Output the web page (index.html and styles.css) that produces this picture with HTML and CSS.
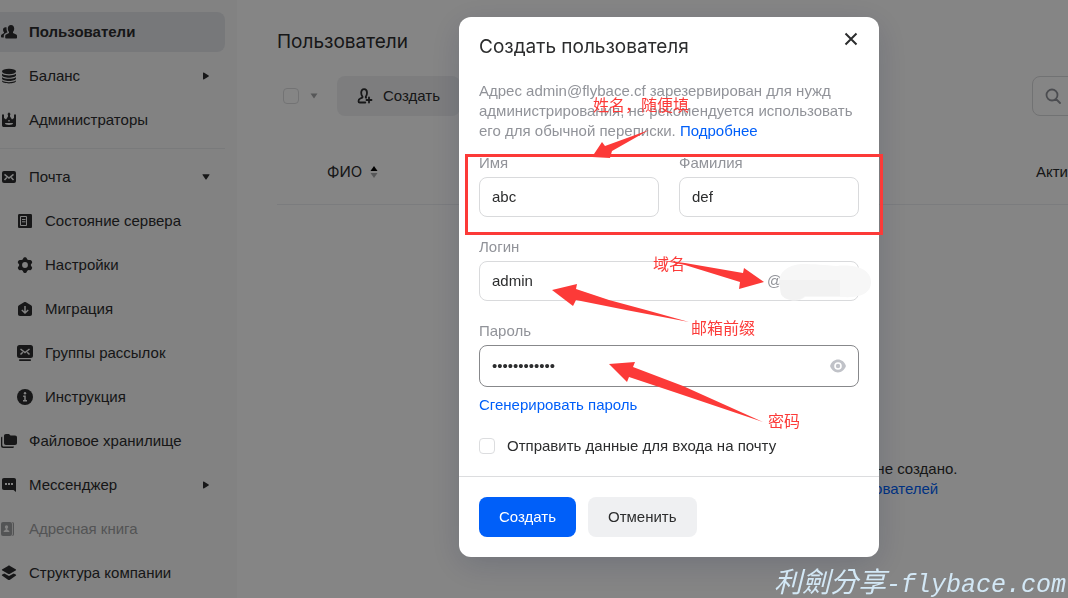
FILE: index.html
```
<!DOCTYPE html>
<html lang="ru">
<head>
    <meta charset="UTF-8">
    <meta name="viewport" content="width=device-width, initial-scale=1.0">
    <title>Пользователи</title>
    <link rel="stylesheet" href="styles.css">
</head>
<body>
    <div class="app">
        <nav class="sidebar">
            <a class="nav-item active" href="#">
                <svg class="icon" viewBox="0 0 16 16"><path d="M10 1c2 0 3.200 1.500 3.200 3.600 0 1.500-.5 2.500-1.200 3.300v1l3.200 1.500c.6.300.8.800.8 1.600v1.700c0 .5-.3.800-.8.800H5c-.5 0-.8-.3-.8-.8V12c0-.8.3-1.300.9-1.600L8 8.900v-1C7.300 7.100 6.800 6.100 6.800 4.600 6.800 2.500 8 1 10 1zM4.500 3.200c.4 0 .8.100 1.100.300-.2 2 .1 3.400.9 4.700L4 9.600c-.8.500-1.100 1.200-1.200 2.400v1.500H.8c-.5 0-.8-.3-.8-.7v-1.100c0-.6.200-1 .7-1.300L3 9V8.300C2.400 7.600 2 6.900 2 5.800c0-1.500 1-2.600 2.500-2.600z"/></svg>
                Пользователи
            </a>
            <a class="nav-item" href="#">
                <svg class="icon" viewBox="0 0 16 16"><ellipse cx="8" cy="3.500" rx="7" ry="2.700"/><path d="M1 5.800c3 2.200 11 2.200 14 0v1.400c0 3.300-14 3.300-14 0zM1 9.200c3 2.200 11 2.200 14 0v1.300c0 3.300-14 3.300-14 0zM1 12.500c3 2.200 11 2.200 14 0v.6c0 3.200-14 3.200-14 0z"/></svg>
                Баланс
                <svg class="caret" viewBox="0 0 8 8"><path d="M1 .9v6.200c0 .4.500.6.800.4L6.600 4.500a.6.600 0 0 0 0-1L1.800.5C1.500.3 1 .5 1 .9z"/></svg>
            </a>
            <a class="nav-item" href="#">
                <svg class="icon" viewBox="0 0 16 16"><path fill-rule="evenodd" d="M1 2.500h2V6l2 1.500 2-3V3.200L6.500 2 8 .3 9.500 2 9 3.200v1.300l2 3L13 6V2.500h2V13c0 1.400-.7 2-2 2H3c-1.300 0-2-.6-2-2zM4 11c0 1.600 1.500 1.900 4 1.900s4-.3 4-1.900zM7.300 8v1.500h1.400V8z"/></svg>
                Администраторы
            </a>
            <hr class="nav-line">
            <a class="nav-item" href="#">
                <svg class="icon" viewBox="0 0 16 16"><rect x="1" y="2" width="14" height="12" rx="2"/><path class="cut" d="M3.500 5.300L8 9l4.500-3.700M3.500 11l2.300-2.500M12.500 11l-2.300-2.500"/></svg>
                Почта
                <svg class="caret" viewBox="0 0 8 8"><path d="M1 1.300h6c.5 0 .7.500.4.800L4.500 6.300a.6.600 0 0 1-1 0L.6 2.100c-.3-.3-.1-.8.400-.8z"/></svg>
            </a>
            <a class="nav-item sub" href="#">
                <svg class="icon" viewBox="0 0 16 16"><path d="M2.500 1h11c1 0 1.500.5 1.500 1.500v11c0 1-.5 1.500-1.500 1.500h-11C1.500 15 1 14.500 1 13.500v-11C1 1.500 1.500 1 2.500 1z"/><path class="cut thin" d="M3.500 3.500h6v9h-6zM5 6.500h3.500M5 8.800h3.500"/></svg>
                Состояние сервера
            </a>
            <a class="nav-item sub" href="#">
                <svg class="icon" viewBox="0 0 16 16"><path fill-rule="evenodd" d="M6.300 1.200C6.800-.1 9.200-.1 9.700 1.200l.6 1.200 1.200.7 1.700-.2c1.300.1 2.500 2.200 1.700 3.300L13.900 7.300v1.400l1 1.300c.8 1.100-.4 3.200-1.700 3.200l-1.700-.2-1.200.7-.6 1.200c-.5 1.300-2.900 1.300-3.400 0l-.6-1.200-1.200-.7-1.700.2c-1.300 0-2.500-2.100-1.700-3.200l1-1.300V7.300l-1-1.100C.3 5.100 1.500 3 2.800 2.900l1.700.2 1.200-.7zM8 5.100a2.900 2.900 0 1 0 0 5.800 2.900 2.900 0 0 0 0-5.800z"/></svg>
                Настройки
            </a>
            <a class="nav-item sub" href="#">
                <svg class="icon" viewBox="0 0 16 16"><path d="M7 1.300c.7-.4 1.300-.4 2 0l5 2.900c.7.400 1 .9 1 1.600V13c0 1.300-.7 2-2 2H3c-1.300 0-2-.7-2-2V5.800c0-.7.300-1.200 1-1.600z"/><path class="cut" d="M8 5v7M4.800 9L8 12l3.200-3"/></svg>
                Миграция
            </a>
            <a class="nav-item sub" href="#">
                <svg class="icon" viewBox="0 0 16 16"><rect x="0" y="0" width="16" height="13" rx="2.500"/><rect x="2" y="14.200" width="12" height="1.800" rx=".8"/><path class="cut" d="M3.500 4L8 7.500 12.500 4M3.500 9.500l2.300-2.300M12.500 9.500l-2.300-2.300"/></svg>
                Группы рассылок
            </a>
            <a class="nav-item sub" href="#">
                <svg class="icon" viewBox="0 0 16 16"><circle cx="8" cy="8" r="8"/><circle class="cut-fill" cx="8" cy="4.200" r="1.200"/><path class="cut" d="M6.200 7.200H8v4.500M6 11.800h4"/></svg>
                Инструкция
            </a>
            <a class="nav-item" href="#">
                <svg class="icon" viewBox="0 0 16 16"><path d="M5 1h3l1.500 1.500H14c1.300 0 2 .7 2 2V10c0 1.300-.7 2-2 2H5c-1.300 0-2-.7-2-2V3c0-1.300.7-2 2-2zM0 5c0-.8.500-1.200 1.300-1.200V12c0 .9.500 1.500 1.500 1.500H13c0 .9-.5 1.500-1.300 1.500H2.500C.8 15 0 14.200 0 12.500z"/></svg>
                Файловое хранилище
            </a>
            <a class="nav-item" href="#">
                <svg class="icon" viewBox="0 0 16 16"><path d="M3 1h10c1.300 0 2 .7 2 2v12l-2.500-2H3c-1.300 0-2-.7-2-2V3c0-1.300.7-2 2-2z"/><path class="cut-fill" d="M4 6h2v2H4zM7 6h2v2H7zM10 6h2v2h-2z"/></svg>
                Мессенджер
                <svg class="caret" viewBox="0 0 8 8"><path d="M1 .9v6.200c0 .4.500.6.800.4L6.600 4.500a.6.600 0 0 0 0-1L1.800.5C1.500.3 1 .5 1 .9z"/></svg>
            </a>
            <a class="nav-item disabled" href="#">
                <svg class="icon" viewBox="0 0 16 16"><rect x="0" y="1" width="11" height="14" rx="2"/><path d="M11 1c1.600 0 2 .8 2 2v10c0 1.200-.4 2-2 2l.8-1.500v-11z"/><circle class="cut-fill" cx="5.500" cy="6" r="1.700"/><path class="cut-fill" d="M4.800 7h1.400v1.500L8.300 10v1H2.700v-1l2.100-1.500z"/></svg>
                Адресная книга
            </a>
            <a class="nav-item" href="#">
                <svg class="icon" viewBox="0 0 16 16"><path d="M7 .9c.7-.4 1.300-.4 2 0l5.600 3.300c.7.400.7.900 0 1.300L9 8.800c-.7.400-1.300.4-2 0L1.400 5.500c-.7-.4-.7-.9 0-1.300zM1.300 9.400l2-1L7 10.600c.7.400 1.300.4 2 0l3.700-2.200 2 1c.6.400.6.900 0 1.300L9 14.800c-.7.400-1.300.4-2 0l-5.700-4.100c-.6-.4-.6-.9 0-1.300z"/></svg>
                Структура компании
            </a>
        </nav>

        <main class="main">
            <div class="content">
                <h1 class="page-title">Пользователи</h1>
                <div class="toolbar">
                    <input class="check" type="checkbox" aria-label="Выбрать всех">
                    <svg class="caret muted" viewBox="0 0 8 8"><path d="M.5 1.500h7L4 6.500z"/></svg>
                    <button class="btn create" type="button">
                        <svg class="icon" viewBox="0 0 16 16"><path class="stroke" d="M8.300 14.500H2.800c-1 0-1.300-.5-1.300-1.300 0-1.500.6-2.200 1.800-2.700l1.900-.8c.5-.3.500-.9.100-1.400C4.500 7.400 4.200 6.200 4.200 4.800c0-2.200 1.100-3.600 2.900-3.600s2.900 1.400 2.900 3.600c0 1.400-.3 2.500-1 3.500-.4.500-.3 1.100.1 1.400M12 9.500v5M9.500 12h5"/></svg>
                        Создать
                    </button>
                    <div class="search">
                        <svg class="icon" viewBox="0 0 16 16"><path class="stroke" d="M7 1.500a5.500 5.500 0 1 1 0 11 5.500 5.500 0 0 1 0-11zM11 11l4 4"/></svg>
                        <input class="search-input" type="text" aria-label="Поиск">
                    </div>
                </div>
                <table class="users">
                    <thead>
                        <tr>
                            <th class="col-name">ФИО
                                <svg class="sort" viewBox="0 0 8 12"><path d="M4 0l3.500 5h-7z"/><path class="faded" d="M.5 7h7L4 12z"/></svg>
                            </th>
                            <th class="col-active">Активность</th>
                        </tr>
                    </thead>
                </table>
                <p class="empty">Ни одного пользователя ещё не создано.<br><a href="#">Перейти к созданию пользователей</a></p>
            </div>
        </main>
    </div>

    <div class="overlay">
        <form class="dialog" role="dialog" aria-labelledby="dialog-title">
            <div class="dialog-body">
                <div class="dialog-head">
                    <h2 class="dialog-title" id="dialog-title">Создать пользователя</h2>
                    <button class="close" type="button" aria-label="Закрыть">
                        <svg class="icon" viewBox="0 0 16 16"><path d="M2.500 2.500l11 11M13.500 2.500l-11 11"/></svg>
                    </button>
                </div>
                <p class="hint">Адрес admin@flybace.cf зарезервирован для нужд администрирования, не рекомендуется использовать его для обычной переписки. <a href="#">Подробнее</a></p>
                <div class="fields">
                    <div class="names">
                        <div class="field">
                            <label for="first-name">Имя</label>
                            <input class="text" id="first-name" type="text" value="abc">
                        </div>
                        <div class="field">
                            <label for="last-name">Фамилия</label>
                            <input class="text" id="last-name" type="text" value="def">
                        </div>
                    </div>
                    <div class="field">
                        <label for="login">Логин</label>
                        <div class="box">
                            <input class="bare" id="login" type="text" value="admin">
                            <span class="domain">@</span>
                        </div>
                    </div>
                    <div class="field">
                        <label for="password">Пароль</label>
                        <div class="box focused">
                            <input class="bare" id="password" type="password" value="abcdef123456">
                            <button class="eye" type="button" aria-label="Показать пароль">
                                <svg class="icon" viewBox="0 0 16 16"><path fill-rule="evenodd" d="M8 1.500c3.500 0 6.200 2.400 7.600 5.400.4.800.4 1.400 0 2.200C14.200 12.100 11.500 14.500 8 14.500S1.800 12.100.4 9.100C0 8.300 0 7.700.4 6.900 1.800 3.900 4.500 1.500 8 1.500zm0 2.700a3.800 3.800 0 1 0 0 7.600 3.800 3.800 0 0 0 0-7.600z"/><circle cx="8" cy="8" r="2.200"/></svg>
                            </button>
                        </div>
                    </div>
                </div>
                <a class="generate" href="#">Сгенерировать пароль</a>
                <div class="send">
                    <input class="check" id="send" type="checkbox">
                    <label for="send">Отправить данные для входа на почту</label>
                </div>
            </div>
            <div class="dialog-foot">
                <button class="btn primary" type="submit">Создать</button>
                <button class="btn" type="button">Отменить</button>
            </div>

            <!-- notes drawn over the form -->
            <svg class="notes" viewBox="0 0 420 540">
                <path class="smudge" d="M320 265c0-9 8-17 22-18 14 0 24 1 36 2 18-2 34 3 34 16 0 12-12 16-28 15h-38c-6 6-21 4-24-3z"/>
                <path class="smudge dark" d="M320 263h61v16h-35c-6 6-21 5-24-2z"/>
                <rect class="frame" x="7.500" y="138.500" width="415" height="78"/>
                <path d="M133 140l10-15 3 4 44-16-37 21-2 7z"/>
                <path d="M201 243l25 3 58 10 1-5 20 14-25 7 1-7-55-17z"/>
                <path d="M93 273l25-6-1 5 33 11 37 10 43 12-63-12-50-10-3 6z"/>
                <path d="M150 347l26-2-2 5 50 19 80 36-86-29-48-16-2 5z"/>
                <text x="134" y="94">姓名，随便填</text>
                <text x="194" y="253">域名</text>
                <text x="232" y="317">邮箱前缀</text>
                <text x="309" y="410">密码</text>
            </svg>
        </form>
    </div>

    <div class="watermark"><span>利劍分享</span>-flybace.com</div>
</body>
</html>
```
FILE: styles.css
```
* {
    box-sizing: border-box;
}
body {
    margin: 0;
    height: 100vh;
    overflow: hidden;
    background: #fff;
    color: #2c2d2e;
    font-family: "Liberation Sans", Arial, sans-serif;
    font-size: 15px;
    line-height: 20px;
}
a {
    color: #005ff9;
    text-decoration: none;
}
input, button {
    font: inherit;
    color: inherit;
}
.icon {
    width: 16px;
    height: 16px;
    flex: none;
    fill: currentColor;
}
.stroke {
    fill: none;
    stroke: currentColor;
    stroke-width: 1.8;
    stroke-linecap: round;
}
.caret {
    width: 8px;
    height: 8px;
    fill: currentColor;
}
.check {
    appearance: none;
    width: 16px;
    height: 16px;
    margin: 0;
    flex: none;
    border: 1px solid #dcdddf;
    border-radius: 4px;
    background: #fff;
}

.app {
    display: flex;
    height: 100vh;
    overflow: hidden;
}
.sidebar {
    flex: 0 0 237px;
    display: flex;
    flex-direction: column;
    gap: 4px;
    padding: 12px 12px 0 0;
    background: #f9f9f9;
    overflow: hidden;
}
.nav-item {
    display: flex;
    flex: none;
    align-items: center;
    gap: 12px;
    height: 40px;
    padding: 0 15px 0 1px;
    border-radius: 0 8px 8px 0;
    color: #2c2d2e;
}
.nav-item .caret {
    margin-left: auto;
}
.nav-item.sub {
    padding-left: 17px;
}
.nav-item.active {
    background: #e4e6ea;
    font-weight: bold;
}
.nav-item.disabled {
    color: #a0a1a3;
}
.cut {
    fill: none;
    stroke: #f9f9f9;
    stroke-width: 1.5;
}
.thin {
    stroke-width: 1;
}
.cut-fill {
    fill: #f9f9f9;
}
.nav-line {
    width: 100%;
    height: 1px;
    margin: 4px 0;
    border: 0;
    background: #e9eaec;
}

.main {
    flex: 1;
    min-width: 0;
    overflow: hidden;
    padding: 30px 0 0 40px;
}
.content {
    width: calc(100% + 164px);
}
.page-title, .dialog-title {
    margin: 0;
    font-family: Inter, sans-serif;
    font-size: 19px;
    font-weight: 400;
    line-height: 24px;
}
.toolbar {
    display: flex;
    align-items: center;
    gap: 11px;
    margin-top: 22px;
    padding-left: 6px;
}
.muted {
    color: #a6a7a9;
}
.btn {
    display: flex;
    align-items: center;
    gap: 10px;
    height: 40px;
    padding: 0 20px;
    border: 0;
    border-radius: 8px;
    background: #eff0f2;
}
.create {
    margin-left: 8px;
}
.search {
    display: flex;
    align-items: center;
    gap: 8px;
    width: 200px;
    height: 40px;
    margin-left: auto;
    padding: 0 12px;
    border: 1px solid #d9dadc;
    border-radius: 8px;
    color: #919399;
}
.search-input {
    width: 100%;
    border: 0;
    background: none;
}
.users {
    width: 100%;
    margin-top: 24px;
    border-collapse: separate;
    border-spacing: 0;
    border-bottom: 1px solid #eceef1;
}
.users th {
    height: 64px;
    padding: 22px 0;
    font-weight: normal;
    text-align: left;
}
.users .col-name {
    padding-left: 50px;
    font-family: Inter, sans-serif;
}
.col-active {
    width: 196px;
}
.sort {
    width: 8px;
    height: 12px;
    margin-left: 4px;
    vertical-align: -1px;
}
.faded {
    fill: #a6a7a9;
}
.empty {
    margin: 254px 0 0;
    padding-left: 118px;
    text-align: center;
}

.overlay {
    position: fixed;
    inset: 0;
    display: flex;
    align-items: flex-start;
    justify-content: center;
    padding: 17px 0 0 270px;
    background: rgba(0, 0, 0, 0.48);
}
.dialog {
    position: relative;
    width: 420px;
    border-radius: 12px;
    background: #fff;
    box-shadow: 0 8px 32px rgba(0, 16, 61, 0.16);
}
.dialog-body {
    padding: 18px 20px 20px;
}
.dialog-head {
    display: flex;
    justify-content: space-between;
}
.close {
    display: flex;
    height: 16px;
    margin-top: -4px;
    padding: 0;
    border: 0;
    background: none;
}
.close .icon {
    stroke: #2c2d2e;
    stroke-width: 2;
}
.hint {
    margin: 22px 0 12px;
    color: #919399;
}
.fields {
    display: flex;
    flex-direction: column;
    gap: 20px;
}
.names {
    display: flex;
    gap: 20px;
}
.field {
    display: flex;
    flex: 1;
    flex-direction: column;
    gap: 4px;
    min-width: 0;
}
.field label {
    color: #919399;
}
.text, .box {
    width: 100%;
    height: 40px;
    border: 1px solid #d9dadc;
    border-radius: 8px;
    background: #fff;
}
.text {
    padding: 0 12px 2px;
}
.box {
    display: flex;
    align-items: center;
    padding: 0 12px;
}
.box.focused {
    height: 42px;
    border-color: #87888b;
}
.bare {
    flex: 1;
    min-width: 0;
    padding: 0;
    border: 0;
    outline: 0;
    background: none;
}
.domain {
    width: 79px;
    color: #919399;
}
.eye {
    display: flex;
    padding: 0;
    border: 0;
    background: none;
    color: #c0c2c8;
}
.generate {
    display: block;
    margin-top: 8px;
}
.send {
    display: flex;
    align-items: center;
    gap: 12px;
    margin-top: 21px;
}
.dialog-foot {
    display: flex;
    gap: 12px;
    padding: 20px;
    border-top: 1px solid #dcdddf;
}
.primary {
    background: #005ff9;
    color: #fff;
}

.notes {
    position: absolute;
    top: 0;
    left: 0;
    width: 420px;
    height: 540px;
    overflow: visible;
    pointer-events: none;
    fill: #fc3a38;
    font-family: "Noto Sans CJK SC", sans-serif;
    font-size: 16px;
}
.frame {
    fill: none;
    stroke: #fc3a38;
    stroke-width: 3;
}
.smudge {
    fill: #f7f7f7;
}
.smudge.dark {
    fill: #f2f2f2;
}
.watermark {
    position: fixed;
    right: 2px;
    bottom: 0;
    color: #d3e8f6;
    font: italic 25px/24px "Liberation Mono", "Noto Sans CJK TC", monospace;
}
.watermark span {
    font-size: 28px;
}
```
